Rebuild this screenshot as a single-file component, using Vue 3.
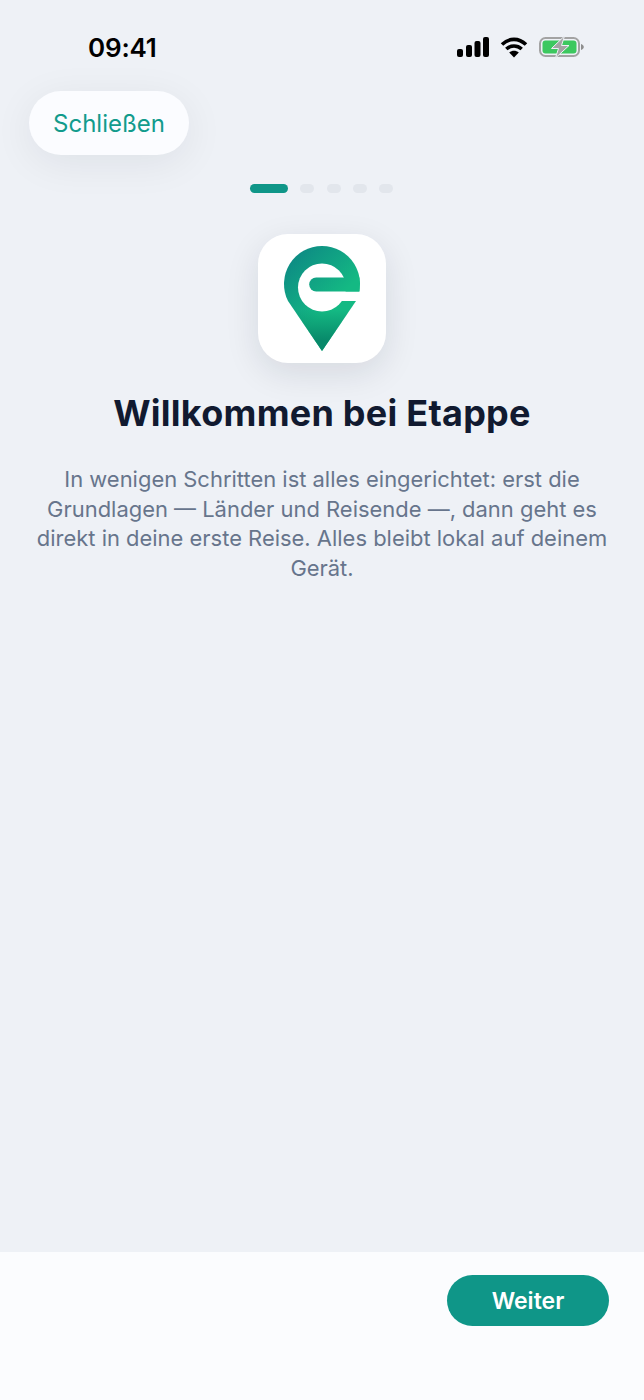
<template>
  <main class="page">
    <!-- Status bar -->
    <div class="statusBar">
      <span class="time">09:41</span>
      <div class="statusIcons">
        <svg class="signal" width="33" height="22" viewBox="0 0 33 22" aria-hidden="true">
          <rect x="1" y="13" width="6" height="8" rx="2" fill="#000" />
          <rect x="10" y="9" width="6" height="12" rx="2" fill="#000" />
          <rect x="18.500" y="5" width="6" height="16" rx="2" fill="#000" />
          <rect x="27" y="1" width="6" height="20" rx="2" fill="#000" />
        </svg>
        <svg class="wifi" width="28" height="22" viewBox="0 0 28 22" aria-hidden="true">
          <path d="M2 8.500C9.200 1.600 18.800 1.600 26 8.500M6.300 13C10.800 9 17.200 9 21.700 13" fill="none" stroke="#000" stroke-width="3.600" />
          <path d="M14 21.500l-4.800-5c2.800-2.200 6.800-2.200 9.600 0z" fill="#000" />
        </svg>
        <svg class="battery" width="46" height="22" viewBox="0 0 46 22" aria-hidden="true">
          <rect x="1" y="2" width="39" height="18" rx="5.500" fill="none" stroke="#a3a3a3" stroke-width="2" />
          <rect x="3.500" y="4.500" width="34" height="13" rx="3" fill="#3cc85f" />
          <path d="M42 8v6c1.600-.5 2.800-1.700 2.800-3S43.600 8.500 42 8z" fill="#8e8e8e" />
          <path d="M25.500 0L12.500 12.500H19.500L16.500 22L30 9.500H22.500z" fill="#a3a3a3" stroke="#eef1f6" stroke-width="1" stroke-linejoin="round" />
        </svg>
      </div>
    </div>

    <div class="topRow">
      <button class="closeButton">Schließen</button>
    </div>

    <!-- Step dots -->
    <div class="steps">
      <span class="step active"></span>
      <span v-for="n in 4" :key="n" class="step"></span>
    </div>

    <div class="content">
      <div class="appIcon">
        <svg width="128" height="129" viewBox="0 0 128 129" aria-hidden="true">
          <defs>
            <linearGradient id="pinGradient" gradientUnits="userSpaceOnUse" x1="27" y1="27" x2="90" y2="90">
              <stop offset="0" stop-color="#0d8a84" />
              <stop offset="0.72" stop-color="#14b983" />
              <stop offset="1" stop-color="#14b983" />
            </linearGradient>
            <linearGradient id="tipGradient" gradientUnits="userSpaceOnUse" x1="64" y1="76" x2="64" y2="117">
              <stop offset="0" stop-color="#08896a" stop-opacity="0" />
              <stop offset="0.75" stop-color="#08896a" />
              <stop offset="1" stop-color="#08896a" />
            </linearGradient>
          </defs>
          <path d="M64 117L30 67A38 38 0 1 1 98 67z" fill="url(#pinGradient)" />
          <path d="M64 117L30 67H98z" fill="url(#tipGradient)" />
          <circle cx="64" cy="53.500" r="24" fill="#fff" />
          <path d="M76 57.500h28V67H76z" fill="#fff" />
          <path d="M58.200 43.500h43.300v14H58.200a7 7 0 0 1 0-14z" fill="url(#pinGradient)" />
        </svg>
      </div>
      <h1 class="title">Willkommen bei Etappe</h1>
      <p class="description">In wenigen Schritten ist alles eingerichtet: erst die Grundlagen — Länder und Reisende —, dann geht es direkt in deine erste Reise. Alles bleibt lokal auf deinem Gerät.</p>
    </div>

    <footer class="footer">
      <button class="nextButton">Weiter</button>
    </footer>
  </main>
</template>

<script setup>
</script>

<style scoped>
.page {
  height: 1400px;
  display: flex;
  flex-direction: column;
  background: #eef1f6;
  font-family: Inter, "Noto Sans", sans-serif;
  overflow: hidden;
}

.statusBar {
  height: 91px;
  box-sizing: border-box;
  padding: 33px 59px 0 88px;
  display: flex;
  justify-content: space-between;
  align-items: flex-start;
}

.time {
  font-size: 26px;
  line-height: 30px;
  font-weight: 600;
  letter-spacing: -0.2px;
  color: #000;
}

.statusIcons {
  display: flex;
  align-items: center;
  gap: 11px;
  padding-top: 3px;
}

.topRow {
  padding-left: 29px;
}

.closeButton {
  width: 160px;
  height: 64px;
  border: none;
  border-radius: 32px;
  background: #fbfcff;
  color: #129b8c;
  font: inherit;
  font-size: 24px;
  box-shadow: 0 8px 40px rgba(15, 23, 42, 0.07);
  padding: 0;
}

.steps {
  margin-top: 29px;
  display: flex;
  justify-content: center;
  gap: 12.250px;
  padding-right: 1px;
}

.step {
  width: 14px;
  height: 9px;
  border-radius: 5px;
  background: #e2e6ec;
}

.step.active {
  width: 38px;
  background: #0f9688;
}

.content {
  flex: 1;
  padding: 41px 36px 0;
  display: flex;
  flex-direction: column;
  align-items: center;
}

.appIcon {
  width: 128px;
  height: 129px;
  border-radius: 30px;
  background: #fff;
  box-shadow: 0 10px 34px rgba(15, 23, 42, 0.11);
}

.appIcon svg {
  display: block;
}

.title {
  margin: 28px 0 0;
  font-size: 36px;
  line-height: 44px;
  font-weight: 700;
  letter-spacing: 0.25px;
  color: #111a30;
  text-align: center;
}

.description {
  margin: 30px 0 0;
  font-size: 21.950px;
  line-height: 29.500px;
  color: #67758c;
  text-align: center;
}

.footer {
  height: 148px;
  box-sizing: border-box;
  padding: 23px 35px 0 0;
  display: flex;
  justify-content: flex-end;
  align-items: flex-start;
  background: #fbfcfe;
}

.nextButton {
  width: 162px;
  height: 51px;
  border: none;
  border-radius: 26px;
  background: #0f9688;
  color: #fff;
  font: inherit;
  font-size: 23px;
  font-weight: 600;
  padding: 0;
}
</style>
